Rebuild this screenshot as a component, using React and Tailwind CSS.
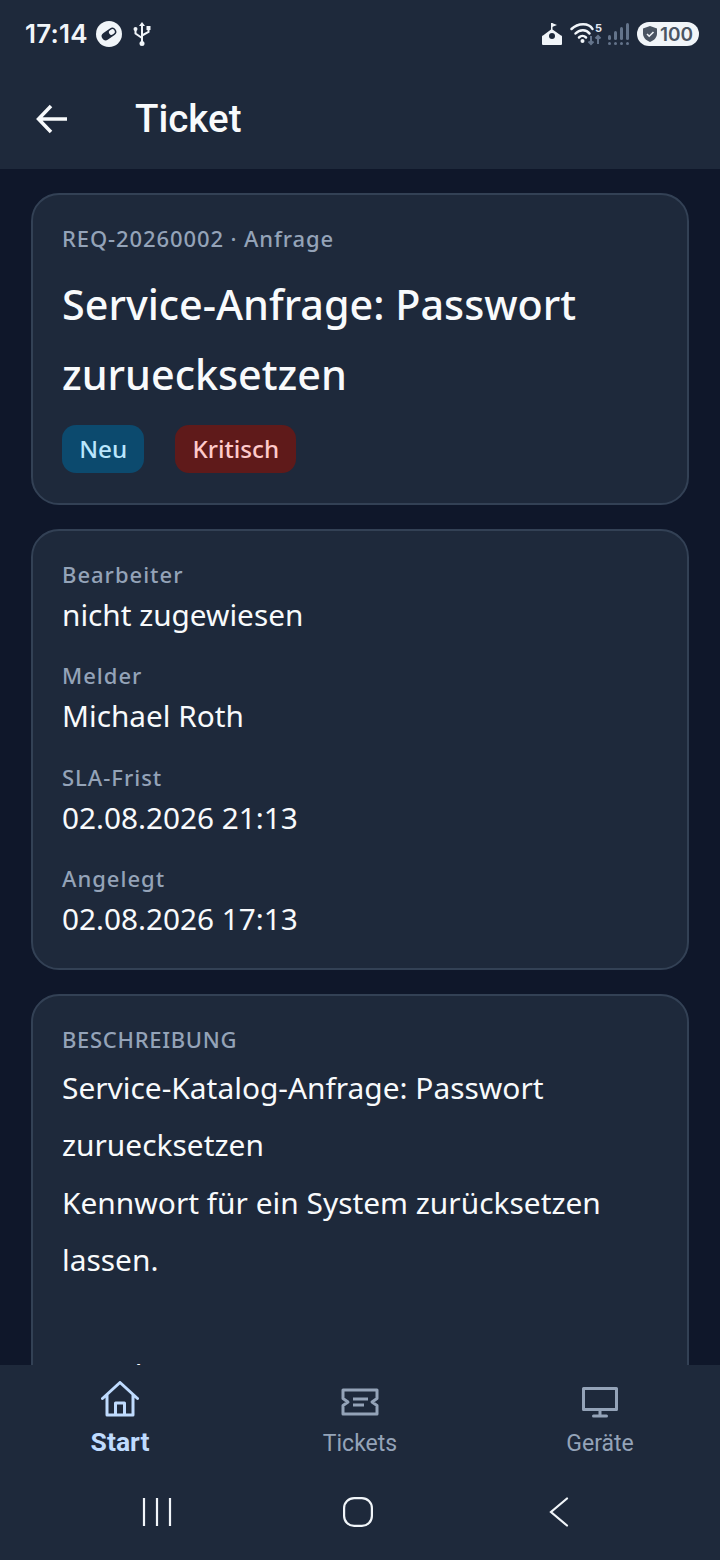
import React from "react";

const Field = ({ label, value }) => (
  <div className="flex flex-col">
    <span className="text-[22px] leading-[30px] font-medium tracking-[1px] text-[#94a3b8]">{label}</span>
    <span className="text-[29.75px] leading-[52px] text-[#f8fafc]">{value}</span>
  </div>
);

const Card = ({ children, className }) => (
  <div className={`rounded-[28px] border-2 border-[#334155] bg-[#1e293b] px-[29px] ${className}`}>
    {children}
  </div>
);

const StatusBar = () => (
  <div className="flex h-[68px] items-center justify-between pl-[25px] pr-[21px]">
    <div className="flex items-center gap-[8px] text-[#f1f5f9]">
      <span className="font-['Inter',sans-serif] text-[26px] font-semibold tracking-[0.2px] leading-none">17:14</span>
      <svg width="26" height="26" viewBox="0 0 26 26">
        <circle cx="13" cy="13" r="13" fill="#f1f5f9" />
        <g transform="rotate(-35 13 13)">
          <rect x="5" y="9" width="16" height="8" rx="4" fill="#1e293b" />
          <rect x="13.5" y="10.5" width="6" height="5" rx="2.5" fill="#f1f5f9" />
        </g>
      </svg>
      <svg width="18" height="26" viewBox="0 0 18 26" fill="none" stroke="#f1f5f9" strokeWidth="2" className="ml-[3px]">
        <path d="M9 3v20M2.5 9v3.5L9 17M15.5 8v3L9 14.5" />
        <path d="M9 1l3 4H6z" fill="#f1f5f9" stroke="none" />
        <circle cx="9" cy="22.5" r="2.5" fill="#f1f5f9" stroke="none" />
        <circle cx="2.5" cy="8" r="2" fill="#f1f5f9" stroke="none" />
        <rect x="13.5" y="5" width="4" height="4" fill="#f1f5f9" stroke="none" />
      </svg>
    </div>
    <div className="flex items-center">
      <svg width="20" height="22" viewBox="0 0 20 22" fill="#f1f5f9">
        <path d="M9 0h1.5v6.5L19 12.5a1 1 0 0 1 1 1V21a1 1 0 0 1-1 1H1a1 1 0 0 1-1-1v-7.5a1 1 0 0 1 1-1l8-6z" />
        <path d="M10 0l5 2-5 2z" />
        <circle cx="10" cy="13" r="3" fill="#1e293b" />
      </svg>
      <svg width="32" height="24" viewBox="0 0 32 24" fill="none" className="ml-[8px] overflow-visible">
        <path d="M1.5 7c6.5-6.5 17.5-6.5 21 0" stroke="#f1f5f9" strokeWidth="2.5" strokeLinecap="round" />
        <path d="M5.5 11.5c4-4.5 11-4.5 14 0" stroke="#f1f5f9" strokeWidth="2.5" strokeLinecap="round" />
        <path d="M9 15.5c2-2 5-2 7 0" stroke="#f1f5f9" strokeWidth="2.5" strokeLinecap="round" />
        <circle cx="12.5" cy="19" r="2" fill="#f1f5f9" />
        <path d="M21 14v8M18.5 19.5L21 22l2.5-2.5M28 22v-8M25.5 16.5L28 14l2.5 2.5" stroke="#64748b" strokeWidth="2" />
        <text x="25" y="10" fill="#e2e8f0" fontSize="11" fontWeight="700" fontFamily="Inter, sans-serif">5</text>
      </svg>
      <svg width="22" height="23" viewBox="0 0 22 23" fill="#64748b" className="ml-[6px]">
        <rect x="0" y="19" width="3" height="3" rx="1.5" />
        <rect x="6" y="19" width="3" height="3" rx="1.5" />
        <rect x="12" y="19" width="3" height="3" rx="1.5" />
        <rect x="18" y="19" width="3" height="3" rx="1.5" />
        <rect x="0" y="12" width="3" height="5" rx="1.5" />
        <rect x="6" y="8" width="3" height="9" rx="1.5" />
        <rect x="12" y="4" width="3" height="13" rx="1.5" />
        <rect x="18" y="0" width="3" height="17" rx="1.5" />
      </svg>
      <div className="ml-[7px] flex h-[24px] w-[62px] items-center justify-center gap-[3px] rounded-full bg-[#f1f5f9]">
        <svg width="14" height="16" viewBox="0 0 14 16">
          <path d="M7 0l7 2.5v5c0 4-3 7-7 8.5-4-1.5-7-4.5-7-8.5v-5z" fill="#4b5563" />
          <path d="M4 8l2.2 2.2L10.5 6" stroke="#f1f5f9" strokeWidth="1.6" fill="none" />
        </svg>
        <span className="font-['Inter',sans-serif] text-[19px] font-semibold leading-none text-[#4b5563]">100</span>
      </div>
    </div>
  </div>
);

const NavItem = ({ icon, label, active }) => (
  <div className="flex flex-1 flex-col items-center">
    <div className="flex h-[44px] items-end justify-center">{icon}</div>
    <span
      className={`font-['Roboto',sans-serif] leading-[32px] ${
        active ? "mt-[9px] text-[26.5px] font-bold text-[#bfdbfe]" : "mt-[11px] text-[23px] font-normal text-[#94a3b8]"
      }`}
    >
      {label}
    </span>
  </div>
);

const App = () => {
  return (
    <div className="flex h-[1560px] w-[720px] flex-col overflow-hidden bg-[#0f172a] font-['Noto_Sans',sans-serif]">
      {/* Kopfbereich */}
      <div className="h-[169px] shrink-0 bg-[#1e293b]">
        <StatusBar />
        <div className="flex h-[101px] items-center pl-[36px]">
          <svg width="32" height="32" viewBox="0 0 32 32" fill="none" stroke="#f8fafc" strokeWidth="3.5">
            <path d="M31 16H3M15 3L2.5 16 15 29" />
          </svg>
          <span className="ml-[67px] font-['Roboto',sans-serif] text-[38.5px] font-medium text-[#f8fafc]">Ticket</span>
        </div>
      </div>

      {/* Inhalt */}
      <div className="flex min-h-0 flex-1 flex-col gap-[24px] overflow-hidden px-[31px] pt-[24px]">
        <Card className="h-[312px] shrink-0 pt-[26px]">
          <div className="text-[22px] leading-[34px] font-medium tracking-[0.9px] text-[#94a3b8]">REQ-20260002 · Anfrage</div>
          <h1 className="mt-[14px] text-[41.3px] leading-[70px] font-medium text-[#f8fafc]">
            Service-Anfrage: Passwort zuruecksetzen
          </h1>
          <div className="mt-[16px] flex gap-[31px]">
            <span className="flex h-[48px] items-center rounded-[14px] bg-[#0c4a6e] px-[17.2px] text-[24.3px] font-medium text-[#bae6fd]">Neu</span>
            <span className="flex h-[48px] items-center rounded-[14px] bg-[#5f1a1a] px-[17px] text-[24.2px] font-medium text-[#fecaca]">Kritisch</span>
          </div>
        </Card>

        <Card className="flex h-[441px] shrink-0 flex-col gap-[19.33px] pt-[28px]">
          <Field label="Bearbeiter" value="nicht zugewiesen" />
          <Field label="Melder" value="Michael Roth" />
          <Field label="SLA-Frist" value="02.08.2026 21:13" />
          <Field label="Angelegt" value="02.08.2026 17:13" />
        </Card>

        <Card className="shrink-0 pt-[28px]">
          <div className="text-[22px] leading-[30px] font-medium tracking-[0.7px] text-[#94a3b8]">BESCHREIBUNG</div>
          <p className="mt-[4.5px] text-[29.9px] leading-[57.5px] text-[#f8fafc]">
            Service-Katalog-Anfrage: Passwort zuruecksetzen
            <br />
            Kennwort für ein System zurücksetzen lassen.
            <br />
            <br />
            Angaben
          </p>
        </Card>
      </div>

      {/* Untere Navigation */}
      <div className="h-[195px] shrink-0 bg-[#1e293b]">
        <div className="flex h-[100px] pt-[8px]">
          <NavItem
            active
            label="Start"
            icon={
              <svg width="38" height="36" viewBox="0 0 38 36" fill="none" stroke="#bfdbfe" strokeWidth="3" strokeLinecap="round" strokeLinejoin="round">
                <path d="M1.5 17.5L19 1.5l17.5 16M6 14v20h26V14M14.5 34V22h9v12" />
              </svg>
            }
          />
          <NavItem
            label="Tickets"
            icon={
              <svg width="38" height="28" viewBox="0 0 38 28" fill="none" stroke="#94a3b8" strokeWidth="3" strokeLinejoin="round" className="mb-[1px]">
                <path d="M2 2h34v8.5L31 14l5 3.5V26H2v-8.5L7 14 2 10.5z" />
                <path d="M12 11h15M12 17h11" />
              </svg>
            }
          />
          <NavItem
            label="Geräte"
            icon={
              <svg width="36" height="31" viewBox="0 0 36 31" fill="none" stroke="#94a3b8" strokeWidth="3" strokeLinejoin="round" strokeLinecap="round" className="-mb-[1px]">
                <rect x="1.5" y="1.5" width="33" height="21" />
                <path d="M18 23v6M11.5 29h13" />
              </svg>
            }
          />
        </div>
        <div className="flex h-[95px] items-center pb-[2px] pl-[56px]">
          <div className="flex w-[201.5px] justify-center">
            <svg width="30" height="30" viewBox="0 0 30 30" stroke="#f1f5f9" strokeWidth="2.2">
              <path d="M2 1v28M15 1v28M28 1v28" />
            </svg>
          </div>
          <div className="flex w-[201.5px] justify-center">
            <svg width="30" height="30" viewBox="0 0 30 30" fill="none" stroke="#f1f5f9" strokeWidth="2.2">
              <rect x="1.1" y="1.1" width="27.8" height="27.8" rx="10" />
            </svg>
          </div>
          <div className="flex w-[199.5px] justify-center">
            <svg width="20" height="30" viewBox="0 0 20 30" fill="none" stroke="#f1f5f9" strokeWidth="2.2" strokeLinecap="round">
              <path d="M18 1.5L2 15l16 13.5" />
            </svg>
          </div>
        </div>
      </div>
    </div>
  );
};

export default App;
